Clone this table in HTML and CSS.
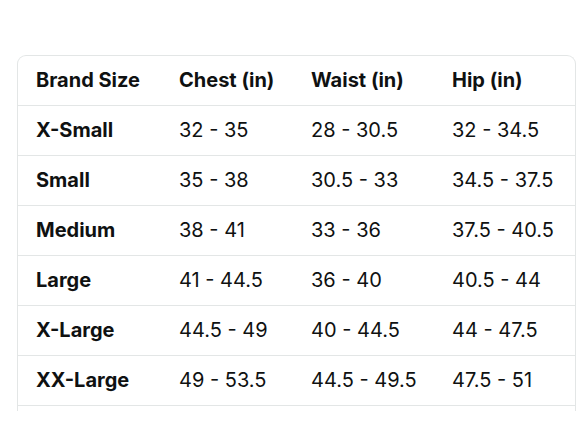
FILE: index.html
```html
<!DOCTYPE html>
<html>
<head>
<meta charset="utf-8">
<link rel="stylesheet" href="styles.css">
</head>
<body>
<div class="page">
  <div class="frame">
    <table class="sizes">
      <thead>
        <tr><th>Brand Size</th><th>Chest (in)</th><th>Waist (in)</th><th>Hip (in)</th></tr>
      </thead>
      <tbody>
        <tr><th>X-Small</th><td>32 - 35</td><td>28 - 30.5</td><td>32 - 34.5</td></tr>
        <tr><th>Small</th><td>35 - 38</td><td>30.5 - 33</td><td>34.5 - 37.5</td></tr>
        <tr><th>Medium</th><td>38 - 41</td><td>33 - 36</td><td>37.5 - 40.5</td></tr>
        <tr><th>Large</th><td>41 - 44.5</td><td>36 - 40</td><td>40.5 - 44</td></tr>
        <tr><th>X-Large</th><td>44.5 - 49</td><td>40 - 44.5</td><td>44 - 47.5</td></tr>
        <tr><th>XX-Large</th><td>49 - 53.5</td><td>44.5 - 49.5</td><td>47.5 - 51</td></tr>
        <tr class="more"><th></th><td></td><td></td><td></td></tr>
      </tbody>
    </table>
  </div>
</div>
</body>
</html>
```
FILE: styles.css
```css
html, body {
  margin: 0;
  padding: 0;
  background: #ffffff;
}
.page {
  padding: 55px 0 0 17px;
}
.frame {
  width: 559px;
  height: 356px;
  overflow: hidden;
  border: 1px solid #e3e6e6;
  border-bottom: none;
  border-radius: 9px 9px 0 0;
  box-sizing: border-box;
}
.sizes {
  border-collapse: separate;
  border-spacing: 0;
  width: 557px;
  table-layout: fixed;
  font-family: Inter, "Open Sans", sans-serif;
  font-size: 20px;
  color: #0f1111;
}
.sizes th, .sizes td {
  height: 50px;
  padding: 0 0 2px 18px;
  text-align: left;
  border-bottom: 1px solid #e3e6e6;
  white-space: nowrap;
  box-sizing: border-box;
}
.sizes th {
  font-weight: 700;
}
.sizes td {
  font-weight: 400;
}
.sizes tr > :nth-child(1) { width: 143px; }
.sizes tr > :nth-child(2) { width: 132px; }
.sizes tr > :nth-child(3) { width: 141px; }
```
